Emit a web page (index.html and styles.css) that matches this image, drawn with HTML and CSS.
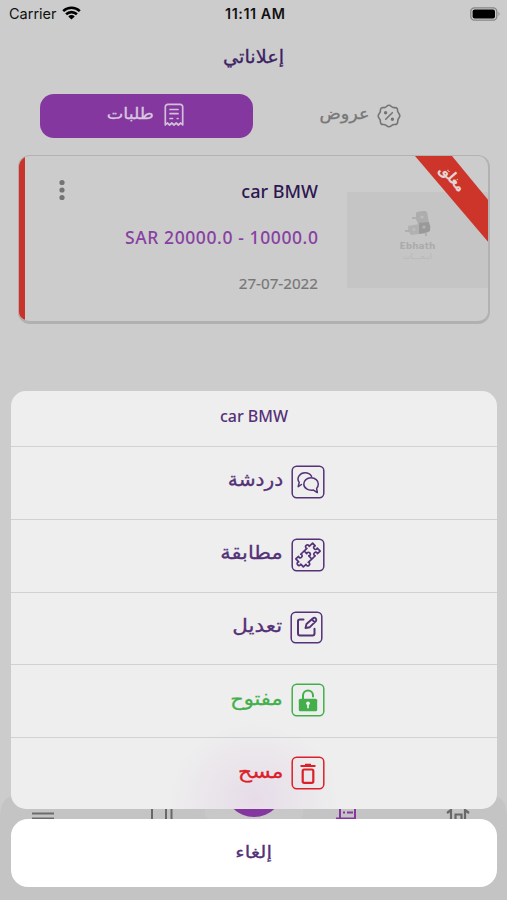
FILE: index.html
```html
<!DOCTYPE html>
<html lang="ar">
<head>
<meta charset="utf-8">
<title>إعلاناتي</title>
<link rel="stylesheet" href="styles.css">
</head>
<body>
<div class="screen">
  <header class="status">
    <div class="carrier"><span>Carrier</span>
      <svg width="19" height="14" viewBox="0 0 19 14" fill="none" stroke="#000" stroke-width="2.6"><path d="M1.2 5.1a12 12 0 0 1 16.6 0M4.1 8.3a7.8 7.8 0 0 1 10.8 0"/><path d="M9.5 13.5 6.3 10.4a4.6 4.6 0 0 1 6.4 0z" fill="#000" stroke="none"/></svg>
    </div>
    <span class="clock">11:11 AM</span>
    <svg class="battery" width="31" height="14" viewBox="0 0 31 14"><rect x=".8" y=".8" width="26" height="12.4" rx="3.6" fill="none" stroke="#858585" stroke-width="1.3"/><rect x="2.6" y="2.4" width="22.4" height="9.2" rx="2" fill="#000"/><path d="M28.5 4.8q2 2.2 0 4.4z" fill="#858585"/></svg>
  </header>
  <h1 class="title"><span>إعلاناتي</span></h1>
  <nav class="tabs">
    <div class="tab active"><span>طلبات</span>
      <svg width="20" height="24" viewBox="0 0 20 24" fill="none" stroke="#d2c0da" stroke-width="1.7" stroke-linecap="round" stroke-linejoin="round"><path d="M1.300 22V4a2.600 2.600 0 0 1 2.600-2.600h12.200A2.600 2.600 0 0 1 18.700 4v18l-2-2-2.300 2-2.200-2-2.200 2-2.200-2-2.200 2-2.300-2zM6 6.500h8M6 10.700h8M6 15.500h2.500M13.300 15.500h.7"/></svg>
    </div>
    <div class="tab"><span>عروض</span>
      <svg width="24" height="24" viewBox="0 0 24 24" fill="none" stroke="#747474" stroke-width="1.600" stroke-linejoin="round" stroke-linecap="round"><path d="M12 1.300C14 1.300 14.500 3.200 16 3.500S19 3.200 20 4.300 20.200 6.600 20.900 8 23 10.200 22.800 12 21.200 14.500 20.900 16 21 18.700 19.900 19.900 17.500 20.200 16 20.700 14 22.700 12 22.700 9.500 21.200 8 20.700 5.200 21 4.100 19.900 3.700 17.500 3.200 16 1.200 14 1.200 12 2.700 9.500 3.200 8 3 5.400 4.100 4.200 6.600 3.900 8 3.500 10 1.300 12 1.300zM8.700 15.300l6.600-6.600"/><circle cx="8.600" cy="8.800" r=".9" fill="#747474"/><circle cx="15.400" cy="15.200" r=".9" fill="#747474"/></svg>
    </div>
  </nav>
  <article class="card">
    <svg class="dots" width="8" height="22" viewBox="0 0 8 22" fill="#747474"><circle cx="4" cy="3.500" r="2.600"/><circle cx="4" cy="11" r="2.600"/><circle cx="4" cy="18.500" r="2.600"/></svg>
    <div class="info">
      <span class="name">car BMW</span>
      <span class="price">SAR 20000.0 - 10000.0</span>
      <span class="date">27-07-2022</span>
    </div>
    <div class="photo">
      <svg width="28" height="30" viewBox="0 0 28 30"><path d="M12 3.500q4-2 9-1.500 2 0 2.500 3l1.500 9-11 1-2-5z" fill="#adadad"/><path d="M15 14l10-1q2 5 1 9l-4 2-7 1z" fill="#999"/><path d="M4 17l11-2v10l-8 1q-3-3-3-9z" fill="#b1b1b1"/><path d="M8 9h4M1 22h4M22 23v4" stroke="#a8a8a8" stroke-width="1.500"/><circle cx="18" cy="8" r="1.600" fill="#bdbdbd"/><circle cx="20" cy="18" r="1.600" fill="#b4b4b4"/><circle cx="10" cy="20.500" r="1.600" fill="#bdbdbd"/></svg>
      <b>Ebhath</b><i>ابـحـــاث</i>
    </div>
    <div class="ribbon"><span>مغلق</span></div>
  </article>
  <footer class="bar">
    <svg width="507" height="105" viewBox="0 0 507 105">
      <path d="M0 20Q1 0 18 0H489Q506 0 507 20V105H0z" fill="#c4c4c4"/><path d="M205 20Q215 40 254 40T303 20V0H205z" fill="#c8c8c8"/>
      <path d="M32 18.500h22M32 23.500h22" stroke="#6c6c6c" stroke-width="1.800"/>
      <path d="M152 10v20M166 10v20M171.500 10v20" stroke="#686868" stroke-width="2"/>
      <circle cx="254" cy="-8" r="30" fill="#84379f"/>
      <path d="M340 10v14M355 10v18M336 23.500h18M343 17.500h2M347 17.500h6" stroke="#84379f" stroke-width="2"/>
      <path d="M447 18l4-3v14M469 18l-4-3v14M455.500 28v-8.500h6V28" fill="none" stroke="#686868" stroke-width="2.200"/>
    </svg>
  </footer>
  <section class="overlay">
    <div class="sheet">
      <div class="head">car BMW</div>
      <div class="row"><span class="w-chat">دردشة</span>
        <svg width="34" height="34" viewBox="0 0 34 34" fill="none" stroke="#553178" stroke-width="1.500" stroke-linejoin="round" stroke-linecap="round"><rect x="1.200" y="1.200" width="31.600" height="31.600" rx="4.500"/><path d="M10.500 19.500l-3.300 2.200 1-4.300C5 13 9 7.800 14 7.800c3 0 5.500 1.700 6.600 3.600"/><path d="M20 12.800c4.300 0 7.300 2.700 7.300 6.200 0 1.900-.8 3.300-1.700 4.400l.7 4.200-3.800-2.500c-5.300 1-9.700-2-9.700-6.100 0-3.500 3.100-6.200 7.200-6.200z"/></svg></div>
      <div class="row"><span class="w-match">مطابقة</span>
        <svg width="34" height="34" viewBox="0 0 34 34" fill="none" stroke="#553178" stroke-width="1.500" stroke-linejoin="round"><rect x="1.200" y="1.200" width="31.600" height="31.600" rx="4.500"/><path transform="translate(17 17) rotate(-43)" stroke-width="1.700" d="M-11.500-5.500h3.700c-2 3.600 5 3.600 3 0H0h3.700c-2-3.600 5-3.600 3 0h4.800v3.700c-3.600-2-3.600 5 0 3v4.300H7.800c2-3.600-5-3.600-3 0H0h-4.800c2 3.600-5 3.600-3 0h-3.700V1.700c-3.600 2-3.600-5 0-3zM0-5.500v3.700c3.600-2 3.600 5 0 3v4.300"/></svg></div>
      <div class="row edit"><span class="w-edit">تعديل</span>
        <svg width="33" height="33" viewBox="0 0 33 33" fill="none" stroke="#553178" stroke-width="1.500" stroke-linejoin="round"><rect x="1.200" y="1.200" width="30.600" height="30.600" rx="4.500"/><path d="M13.500 8.500H9.800Q8 8.500 8 10.300V22.500q0 2 2 2h12.500q2 0 2-2v-4.700" stroke-width="2" stroke-linecap="round"/><path d="M15.500 17l1-4 6.500-5.800q1.500-1 2.700.2t.2 2.700l-6.100 6.100zM22 8.500l2.800 2.800" stroke-width="1.900"/></svg></div>
      <div class="row green"><span class="w-open">مفتوح</span>
        <svg width="34" height="34" viewBox="0 0 34 34" fill="none" stroke="#43af4a" stroke-width="1.500"><rect x="1.200" y="1.200" width="31.600" height="31.600" rx="4.500"/><path d="M12 16v-3.500a5 5 0 0 1 10 0v1" stroke-width="2" stroke-linecap="round"/><rect x="7.800" y="15.800" width="18.400" height="12.400" rx="1.500" fill="#43af4a" stroke="none"/><circle cx="17" cy="20.300" r="1.900" fill="#eee" stroke="none"/><path d="M17 21v4.300" stroke="#eee" stroke-width="1.800"/></svg></div>
      <div class="row red"><span class="w-delete">مسح</span>
        <svg width="34" height="34" viewBox="0 0 34 34" fill="none" stroke="#dc2029" stroke-width="1.500"><rect x="1.200" y="1.200" width="31.600" height="31.600" rx="4.500"/><path d="M9.500 10h15M14 8.700h6" stroke-width="1.900"/><rect x="11.700" y="13.500" width="10.600" height="13.300" rx="1.500" stroke-width="2.200"/></svg></div>
    </div>
    <div class="cancel"><span>إلغاء</span></div>
  </section>
</div>
</body>
</html>
```

FILE: styles.css
```css
* { box-sizing: border-box; }
body { margin: 0; }
.screen { position: relative; width: 507px; height: 900px; overflow: hidden; background: #ccc; font-family: "Noto Sans", "DejaVu Sans", sans-serif; display: flex; flex-direction: column; }
.status { height: 28px; padding: 0 6px 0 9px; display: grid; grid-template-columns: 1fr auto 1fr; align-items: center; font: 14.5px/28px Inter, sans-serif; color: #111; }
.carrier { display: flex; align-items: center; gap: 6px; }
.carrier svg { margin-top: -2px; margin-left: -1px; }
.clock { font-weight: 600; font-size: 14.3px; letter-spacing: .55px; margin-right: -.5px; }
.battery { justify-self: end; margin-top: -1px; }
.title { margin: 0; height: 66px; text-align: center; font: 18px/58px "DejaVu Sans", sans-serif; color: #3c2363; }
.title span, .tab span, .row span, .cancel span { display: inline-block; -webkit-text-stroke: .3px currentColor; }
.title span { transform: scaleX(1.07); }
.tabs { display: flex; height: 44px; margin: 0 40px; }
.tab { width: 213px; display: flex; align-items: center; justify-content: center; gap: 11px; font: 16px/40px "DejaVu Sans", sans-serif; color: #777; padding-left: 2px; }
.tab span { transform: scaleX(1.1); transform-origin: right; margin-top: -5px; }
.tab svg { margin-top: -3px; }
.tab + .tab { gap: 8px; padding-left: 6px; }
.tab + .tab svg { margin-top: -1px; }
.tab.active { background: #84379f; border-radius: 14px; color: #d8c8df; }
.card { position: relative; margin: 17px 17px 0 18px; height: 169px; border: 1.5px solid #b2b2b2; border-bottom: 3px solid #b0b0b0; border-left: 1px solid #b8aaa9; border-right-width: 2px; border-radius: 12px; overflow: hidden; display: flex; }
.card::before { content: ""; width: 6px; background: #c8342c; flex: none; }
.dots { margin: 23px 0 0 33px; flex: none; }
.info { margin-left: auto; display: flex; flex-direction: column; align-items: flex-end; padding-top: 22px; font-weight: 500; }
.name { font-size: 18px; line-height: 27px; color: #2c1751; }
.price { font-size: 17.5px; line-height: 27px; margin-top: 19px; color: #8840a3; letter-spacing: .6px; margin-right: -.6px; }
.date { font-size: 15.2px; line-height: 24px; margin-top: 20px; color: #777; font-weight: 400; -webkit-text-stroke: .2px currentColor; }
.photo { width: 141px; height: 96px; margin: 36px 0 0 29px; background: #c5c5c5; display: flex; flex-direction: column; align-items: center; padding-top: 17px; }
.photo svg { flex: none; }
.photo b { font: bold 9px/12px "DejaVu Sans", sans-serif; color: #ababab; margin-top: 1px; }
.photo i { font: 8px/9px "DejaVu Sans", sans-serif; color: #b8b8b8; }
.ribbon { position: absolute; right: -1px; top: 0; width: 74px; height: 87px; background: #cd352b; clip-path: polygon(0 0, 37px 0, 100% 45px, 100% 100%); }
.ribbon span { position: absolute; left: 19px; top: 13px; font: bold 15px/18px "DejaVu Sans", sans-serif; color: #e2d5d4; transform: rotate(49deg) scaleX(.82); }
.bar { height: 105px; margin-top: auto; }
.overlay { position: absolute; inset: 391px 10px 13px 11px; display: flex; flex-direction: column; gap: 10.500px; color: #553178; }
.sheet { height: 418.500px; border-radius: 15px; overflow: hidden; background: radial-gradient(ellipse 85px 75px at 243px 408px, #e6dce8, #eae5eb 50%, #eee); }
.head { height: 55px; text-align: center; font-size: 16px; font-weight: 500; line-height: 50px; }
.row { height: 72.800px; border-top: 1.500px solid #d1d1d1; display: flex; align-items: center; padding: 0 172px 2px 0; justify-content: flex-end; gap: 8px; font: 19px/60px "DejaVu Sans", sans-serif; }
.row span { margin-top: -5px; transform: scaleX(1.1); transform-origin: right; }
.row .w-chat { transform: scaleX(1.06); }
.row .w-edit { transform: scaleX(1.13); }
.row .w-delete { transform: scaleX(1.15); }
.edit { padding-right: 174px; }
.green { color: #43af4a; }
.red { color: #dc2029; }
.cancel { height: 68px; border-radius: 17px; background: #fff; text-align: center; font: 17px/66px "DejaVu Sans", sans-serif; }
.cancel span { transform: scaleX(1.17); }
```
